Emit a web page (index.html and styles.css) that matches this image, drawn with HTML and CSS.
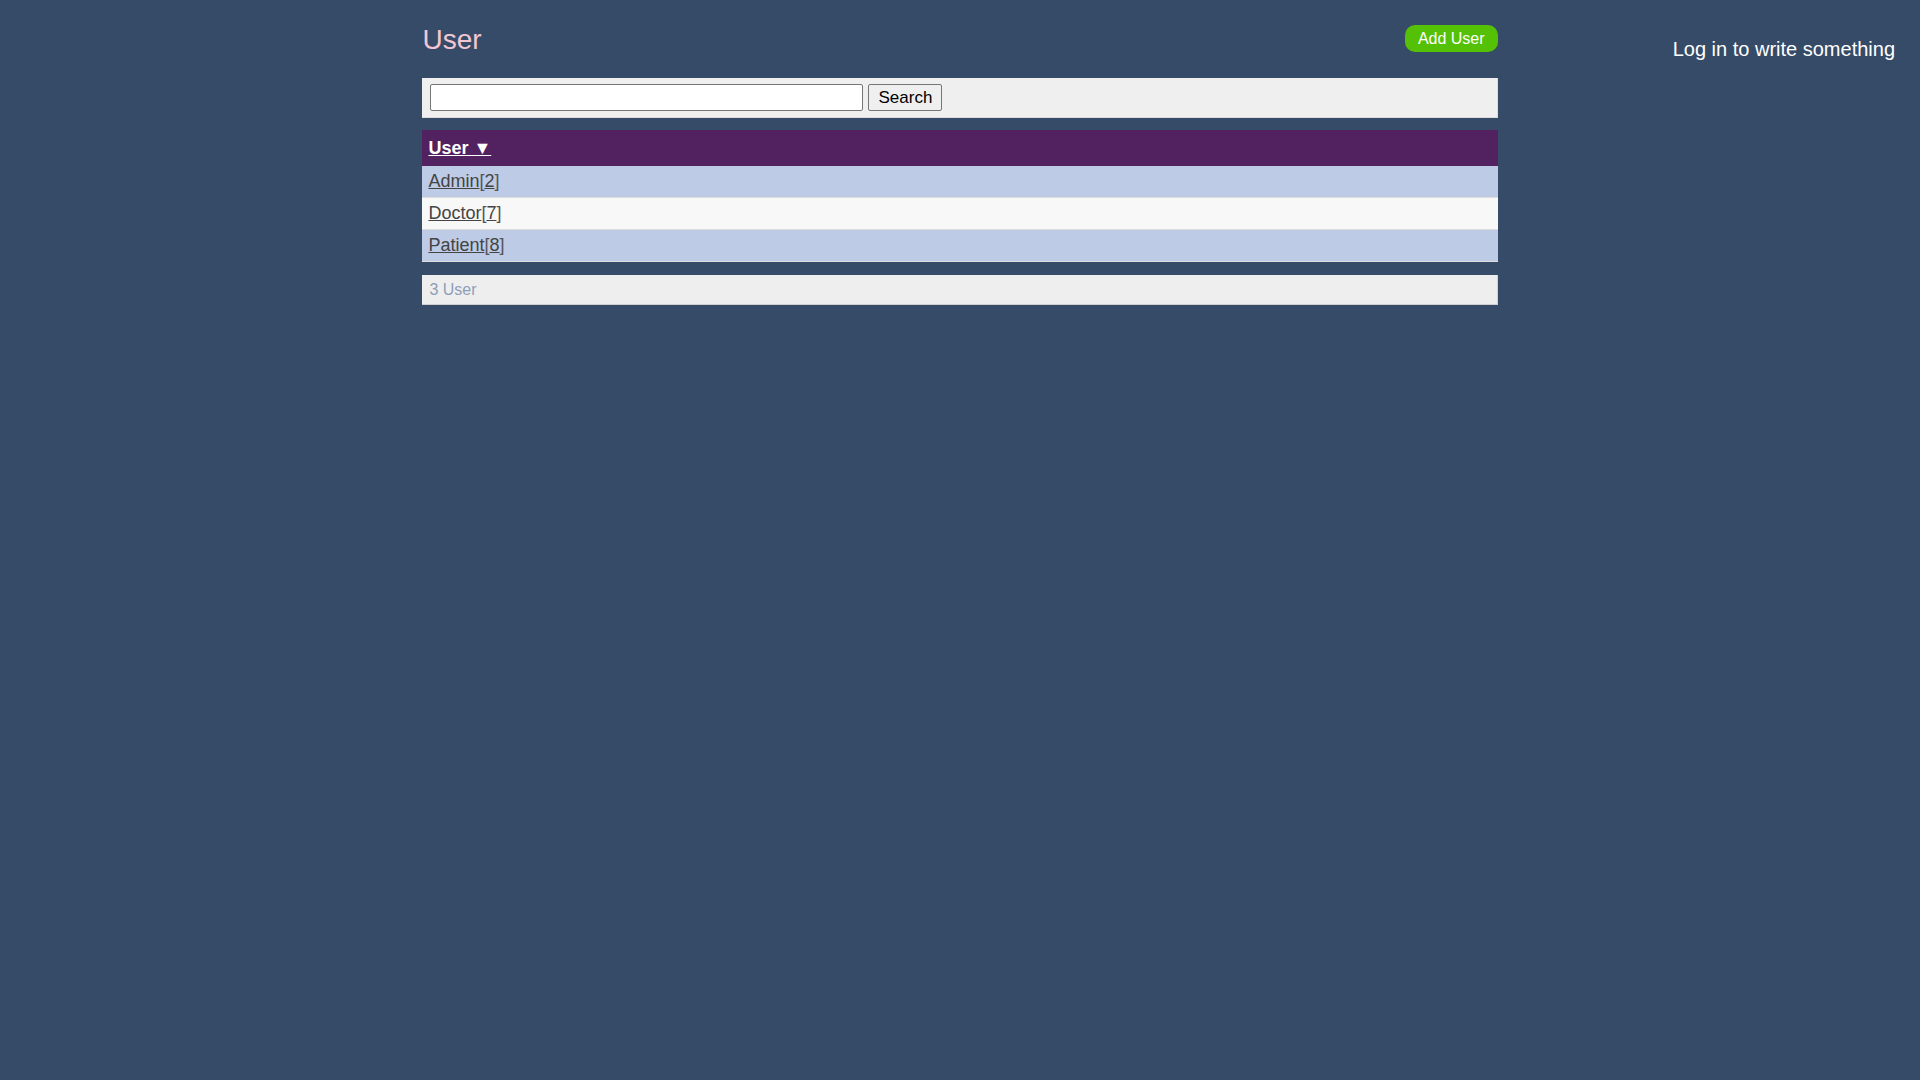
FILE: index.html
```html
<!DOCTYPE html>
<html>
<head>
<meta charset="utf-8">
<link rel="stylesheet" href="styles.css">
<title>User</title>
</head>
<body>
<div class="layout">
  <div class="side-left"></div>
  <main class="main">
    <div class="page-head">
      <h1 class="title">User</h1>
      <a class="add-btn" href="#">Add User</a>
    </div>
    <form class="search-bar">
      <input class="search-input" type="text">
      <button class="search-btn" type="button">Search</button>
    </form>
    <table class="list">
      <thead>
        <tr><th><a href="#">User ▼</a></th></tr>
      </thead>
      <tbody>
        <tr class="odd"><td><a href="#">Admin</a>[<a href="#">2</a>]</td></tr>
        <tr class="even"><td><a href="#">Doctor</a>[<a href="#">7</a>]</td></tr>
        <tr class="odd"><td><a href="#">Patient</a>[<a href="#">8</a>]</td></tr>
      </tbody>
    </table>
    <div class="list-foot">3 User</div>
  </main>
  <aside class="side-right">
    <div class="login-note">Log in to write something</div>
  </aside>
</div>
</body>
</html>
```

FILE: styles.css
```css
html, body {
  margin: 0;
  padding: 0;
  background: #364b67;
  font-family: "Liberation Sans", Arial, sans-serif;
  font-size: 16px;
  min-height: 1080px;
}

.layout {
  display: grid;
  grid-template-columns: 1fr 56% 1fr;
}

.main {
  padding-top: 24px;
}

.page-head {
  display: flex;
  justify-content: space-between;
  align-items: flex-start;
}

.title {
  margin: 0;
  font-size: 28px;
  line-height: 32px;
  font-weight: normal;
  color: #f2c6d2;
}

.add-btn {
  margin-top: 1px;
  height: 27px;
  line-height: 27px;
  padding: 0 13px;
  border-radius: 10px;
  background: #55c106;
  color: #ffffff;
  text-decoration: none;
  font-size: 16px;
}

.search-bar {
  margin: 22px 0 0;
  display: flex;
  align-items: center;
  gap: 5px;
  padding: 6px 8px;
  background: #efefef;
  border-right: 1px solid #dcdcdc;
  border-bottom: 1px solid #dcdcdc;
}

.search-input {
  box-sizing: border-box;
  width: 433px;
  height: 27px;
  margin: 0;
  border: 1px solid #767676;
  border-radius: 2px;
  background: #fff;
  font-family: "Liberation Sans", Arial, sans-serif;
  font-size: 16px;
}

.search-btn {
  box-sizing: border-box;
  width: 74px;
  height: 27px;
  margin: 0;
  padding: 0;
  border: 1px solid #767676;
  border-radius: 2px;
  background: #efefef;
  color: #000;
  font-family: "Liberation Sans", Arial, sans-serif;
  font-size: 17px;
}

.list {
  width: 100%;
  margin-top: 12px;
  border-collapse: collapse;
}

.list th {
  background: #52215f;
  text-align: left;
  padding: 8px 6px 7px;
  line-height: 21px;
  font-size: 18px;
  font-weight: bold;
}

.list th a {
  color: #ffffff;
  text-decoration: underline;
}

.list td {
  padding: 5px 6px;
  line-height: 21px;
  font-size: 18px;
  color: #555;
  border-bottom: 1px solid #dedede;
}

.list td a {
  color: #444;
  text-decoration: underline;
}

.list tr.odd td {
  background: #bdcbe7;
}

.list tr.even td {
  background: #f8f8f8;
}

.list-foot {
  margin-top: 13px;
  padding: 6px 7px 5px;
  line-height: 18px;
  font-size: 16px;
  color: #8d9dbb;
  background: #eeeeee;
  border-right: 1px solid #cfcfcf;
  border-bottom: 1px solid #cfcfcf;
}

.side-right {
  padding-top: 38px;
  padding-right: 25px;
  text-align: right;
}

.login-note {
  color: #ffffff;
  font-size: 20px;
  line-height: 23px;
}
```
